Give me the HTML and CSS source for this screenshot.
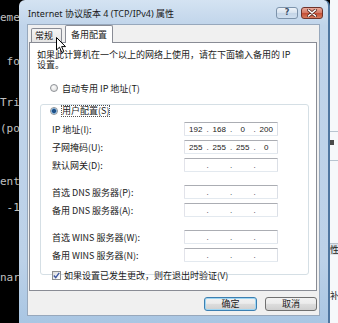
FILE: index.html
```html
<!DOCTYPE html>
<html>
<head>
<meta charset="utf-8">
<title>Internet 协议版本 4 (TCP/IPv4) 属性</title>
<link rel="stylesheet" href="styles.css">
</head>
<body>
<div class="term">
<div class="l1">eme</div>
<div class="l2"> fo</div>
<div class="l3">Tri</div>
<div class="l4">(po</div>
<div class="l5">ent</div>
<div class="l6"> -1</div>
<div class="l7">nar</div>
</div>

<div class="win">
  <div class="titlebar">
    <div class="title">Internet 协议版本 4 (TCP/IPv4) 属性</div>
    <div class="capbtn help">?</div>
    <div class="capbtn close">
      <svg width="10" height="8" viewBox="0 0 10 8"><path d="M1.5 1 L8.5 7 M8.5 1 L1.5 7" stroke="#5a2a22" stroke-width="3" stroke-linecap="round"/><path d="M1.5 1 L8.5 7 M8.5 1 L1.5 7" stroke="#fff" stroke-width="1.6" stroke-linecap="round"/></svg>
    </div>
  </div>

  <div class="client">
    <div class="tabs">
      <div class="tab">常规</div>
      <div class="tab sel">备用配置</div>
    </div>

    <div class="page">
      <div class="desc">如果此计算机在一个以上的网络上使用，请在下面输入备用的 IP</div>
      <div class="desc">设置。</div>
      <div class="opt"><span class="radio"></span>自动专用 IP 地址(T)</div>

      <div class="group">
        <div class="legend"><span class="radio on"></span><span class="focus">用户配置(S)</span></div>

        <div class="row first"><label>IP 地址(I):</label>
          <div class="ip"><span>192</span><i>.</i><span>168</span><i>.</i><span>0</span><i>.</i><span>200</span></div></div>
        <div class="row"><label>子网掩码(U):</label>
          <div class="ip"><span>255</span><i>.</i><span>255</span><i>.</i><span>255</span><i>.</i><span>0</span></div></div>
        <div class="row"><label>默认网关(D):</label>
          <div class="ip"><span></span><i>.</i><span></span><i>.</i><span></span><i>.</i><span></span></div></div>

        <div class="row sp"><label>首选 DNS 服务器(P):</label>
          <div class="ip"><span></span><i>.</i><span></span><i>.</i><span></span><i>.</i><span></span></div></div>
        <div class="row"><label>备用 DNS 服务器(A):</label>
          <div class="ip"><span></span><i>.</i><span></span><i>.</i><span></span><i>.</i><span></span></div></div>

        <div class="row sp"><label>首选 WINS 服务器(W):</label>
          <div class="ip"><span></span><i>.</i><span></span><i>.</i><span></span><i>.</i><span></span></div></div>
        <div class="row"><label>备用 WINS 服务器(N):</label>
          <div class="ip"><span></span><i>.</i><span></span><i>.</i><span></span><i>.</i><span></span></div></div>

        <div class="check"><span class="box"><svg width="7" height="7" viewBox="0 0 7 7"><path d="M0.8 3.6 L2.7 5.6 L6.2 0.9" fill="none" stroke="#3d57a0" stroke-width="1.4"/></svg></span>如果设置已发生更改，则在退出时验证(V)</div>
      </div>
    </div>

    <div class="buttons">
      <div class="btn def">确定</div>
      <div class="btn">取消</div>
    </div>
  </div>
</div>

<div class="behind">
  <div class="ln a"></div>
  <div class="mark"></div>
  <div class="ln b"></div>
  <div class="hd">性</div>
  <div class="ch">补</div>
</div>

<svg class="cursor" width="11" height="17" viewBox="0 0 11 17"><path d="M0.5 0.5 L0.5 13 L3.5 10.2 L5.8 15.5 L7.8 14.6 L5.6 9.6 L9.5 9.6 Z" fill="#fff" stroke="#000" stroke-width="1"/></svg>
</body>
</html>
```

FILE: styles.css
```css
* {
  box-sizing: border-box;
}

body {
  margin: 0;
  width: 338px;
  height: 323px;
  overflow: hidden;
  background: #000;
  display: flex;
  position: relative;
  font-family: "Noto Sans CJK SC", sans-serif;
  font-size: 9px;
  color: #1a1a1a;
}

/* console behind the dialog */
.term {
  width: 19px;
  flex: none;
  overflow: hidden;
  color: #c0c0c0;
  font-family: "DejaVu Sans Mono", monospace;
  font-size: 11px;
  line-height: 12px;
  white-space: pre;
}
.l2 { margin-top: 20px; }
.l3 { margin-top: 17px; }
.l4 { margin-top: 2px; }
.l5 { margin-top: 29px; }
.l6 { margin-top: 2px; }
.l7 { margin-top: 46px; }

/* window frame */
.win {
  width: 311px;
  height: 323px;
  flex: none;
  display: flex;
  flex-direction: column;
  background: linear-gradient(#d4e3f2, #c0d4ea 26px, #bcd1e8 260px, #a9c6e3);
  border-right: 2px solid #4f76a0;
  border-radius: 6px 6px 0 0;
}

.titlebar {
  height: 24px;
  flex: none;
  display: flex;
  align-items: flex-start;
  padding: 0 5px 0 9px;
}

.title {
  flex: 1;
  margin-top: 7px;
  line-height: 13px;
  font-family: "Noto Sans", "Noto Sans CJK SC", sans-serif;
  font-size: 9px;
  color: #1b1b1b;
}

.capbtn {
  width: 22px;
  height: 12px;
  margin-top: 7px;
  border-radius: 3px;
  display: flex;
  align-items: center;
  justify-content: center;
}
.help {
  border: 1px solid #7d93ab;
  background: linear-gradient(#eef3f9, #d9e4f0 45%, #c4d4e6 50%, #cfdff0);
  color: #3a4f68;
  font-family: "DejaVu Sans", sans-serif;
  font-weight: bold;
  font-size: 8px;
  line-height: 10px;
}
.close {
  margin-left: 3px;
  border: 1px solid #6f332b;
  background: linear-gradient(#e9a99b, #d67a66 45%, #c34a31 50%, #d77c5f);
}

/* client area */
.client {
  height: 292px;
  margin: 0 8px 0 8px;
  background: #f0f0f0;
  border: 1px solid #97a8bc;
  padding: 0 2px 0 1px;
}

.tabs {
  height: 17px;
  display: flex;
  align-items: flex-end;
  padding-left: 2px;
}

.tab {
  height: 14px;
  padding: 0 8px 0 3px;
  border: 1px solid #898c95;
  border-bottom: none;
  border-radius: 2px 2px 0 0;
  background: linear-gradient(#f4f4f4, #e4e4e4);
  line-height: 13px;
}
.tab.sel {
  height: 18px;
  margin-bottom: -1px;
  margin-left: 3px;
  padding: 0 5px;
  background: #fff;
  line-height: 17px;
  position: relative;
  z-index: 1;
}

.page {
  height: 249px;
  background: #fff;
  border: 1px solid #898c95;
  padding-top: 7px;
}

.desc {
  margin: 0 0 0 7px;
  height: 10px;
  line-height: 10px;
}

.opt {
  margin-top: 12px;
  height: 12px;
  padding-left: 20px;
  display: flex;
  align-items: center;
  gap: 4px;
}

.radio {
  width: 8px;
  height: 8px;
  flex: none;
  border-radius: 50%;
  border: 1px solid #8e9296;
  background: radial-gradient(circle at 40% 35%, #fdfdfd, #d6d6d6);
}
.radio.on {
  background: radial-gradient(circle, #1f4f86 0 1.6px, #6aa6dc 2.4px, #cde2f4 3px);
}

.group {
  height: 171px;
  margin: 10px 7px 0 10px;
  border: 1px solid #d5dfe5;
  border-radius: 3px;
  padding-left: 11px;
}

.legend {
  margin: -8px 0 0 -4px;
  height: 12px;
  padding: 0 2px;
  display: inline-flex;
  align-items: center;
  gap: 4px;
  background: #fff;
}
.focus {
  outline: 1px dotted #555;
  outline-offset: 0;
  line-height: 10px;
}

.row {
  height: 14px;
  display: flex;
  align-items: center;
  margin-top: 4px;
}
.row.first { margin-top: 4px; }
.row.sp { margin-top: 13px; }

.row label {
  width: 132px;
  flex: none;
}

.ip {
  width: 94px;
  height: 14px;
  border: 1px solid;
  border-color: #abadb3 #dbdfe6 #e3e9ef #e2e3ea;
  border-radius: 1px;
  background: #fff;
  display: grid;
  grid-template-columns: 1fr 2px 1fr 2px 1fr 2px 1fr;
  align-items: center;
  font-family: "Liberation Sans", sans-serif;
  font-size: 8px;
  color: #222;
}
.ip span {
  text-align: center;
}
.ip i {
  font-style: normal;
  text-align: center;
  color: #333;
}

.check {
  margin-top: 7px;
  height: 12px;
  display: flex;
  align-items: center;
  gap: 3px;
}
.box {
  width: 9px;
  height: 9px;
  flex: none;
  border: 1px solid #8e8f8f;
  background: linear-gradient(135deg, #dcdcdc, #fff);
  display: flex;
  align-items: center;
  justify-content: center;
}

.buttons {
  margin-top: 6px;
  display: flex;
  justify-content: flex-end;
  gap: 8px;
}

.btn {
  width: 52px;
  height: 14px;
  border: 1px solid #707070;
  border-radius: 3px;
  background: linear-gradient(#f2f2f2 0, #ebebeb 45%, #dddddd 50%, #cfcfcf);
  text-align: center;
  line-height: 12px;
}
.btn.def {
  width: 53px;
  border-color: #3c7fb1;
  box-shadow: inset 0 0 0 1px #9fd6f3;
}

/* other window at the right edge */
.behind {
  flex: 1;
  background: #f6f8fb;
  position: relative;
  color: #222;
}
.ln {
  height: 1px;
  background: #b8c4d0;
  margin-top: 131px;
}
.ln.b { margin-top: 15px; }
.mark {
  width: 4px;
  height: 5px;
  margin-top: 8px;
  background: #4a4a4a;
}
.hd {
  margin-top: 82px;
  height: 12px;
  line-height: 12px;
  background: #dde3ea;
  border-top: 1px solid #b9c3cd;
}
.ch {
  margin-top: 36px;
  line-height: 10px;
}

/* mouse pointer over the tabs */
.cursor {
  position: absolute;
  left: 56px;
  top: 37px;
}
```
